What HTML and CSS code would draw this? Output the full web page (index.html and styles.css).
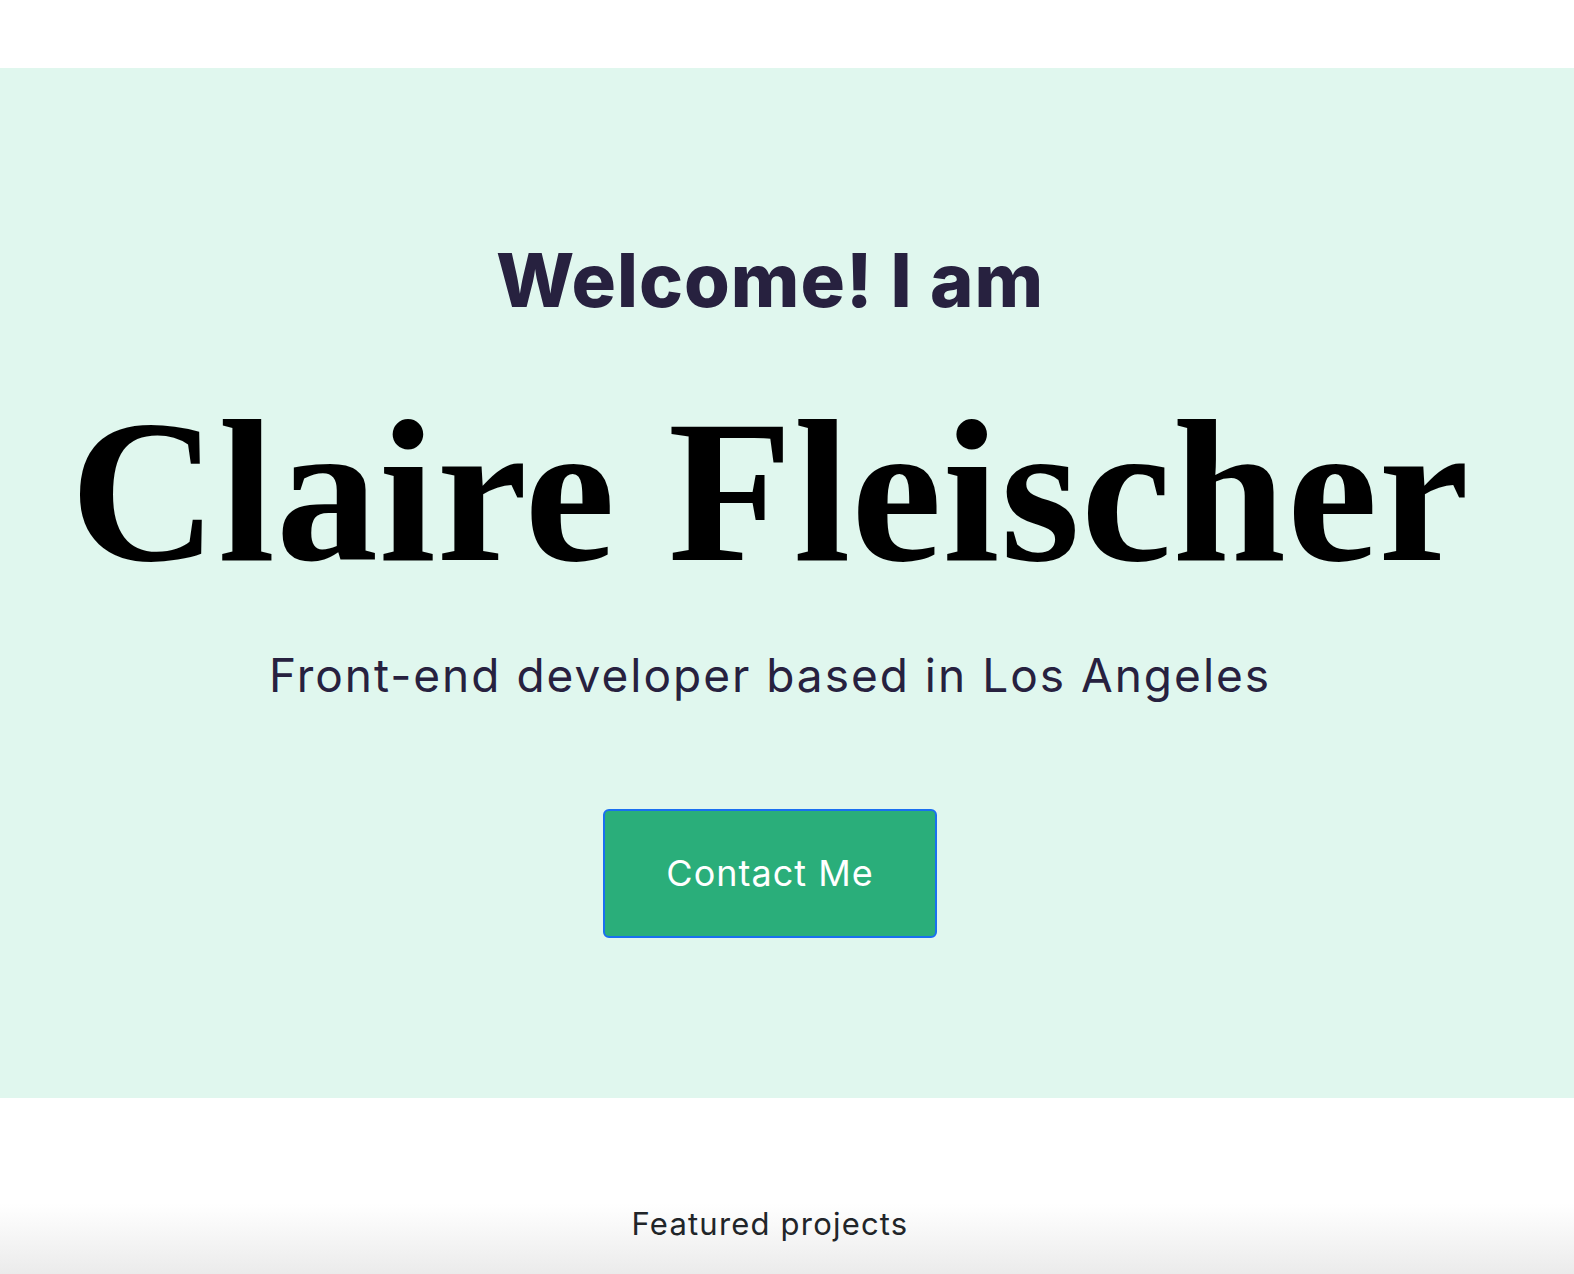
FILE: index.html
```html
<!DOCTYPE html>
<html lang="en">
<head>
<meta charset="utf-8">
<title>Claire Fleischer</title>
<link rel="stylesheet" href="styles.css">
</head>
<body>
<header class="topbar"></header>
<main>
  <section class="hero">
    <h2 class="welcome">Welcome! I am</h2>
    <h1 class="name">Claire Fleischer</h1>
    <p class="tagline">Front-end developer based in Los Angeles</p>
    <a class="contact-btn" href="#contact">Contact Me</a>
  </section>
  <section class="projects">
    <h3 class="projects-title">Featured projects</h3>
  </section>
</main>
</body>
</html>
```
FILE: styles.css
```css
html, body {
  margin: 0;
  padding: 0;
  background: #ffffff;
}
body {
  font-family: Inter, "Open Sans", sans-serif;
}
.topbar {
  height: 68px;
  background: #ffffff;
}
.hero {
  background: #e0f7ee;
  height: 1030px;
  box-sizing: border-box;
  padding: 168px 34px 0 0;
  display: flex;
  flex-direction: column;
  align-items: center;
}
.welcome {
  margin: 0;
  font-family: Inter, sans-serif;
  font-weight: 800;
  font-size: 74px;
  line-height: 1.2;
  color: #27213f;
  letter-spacing: 1px;
}
.name {
  margin: 64px 0 0;
  font-family: "Liberation Serif", "Times New Roman", serif;
  font-weight: 700;
  font-size: 204px;
  line-height: 1;
  color: #000000;
  white-space: nowrap;
  letter-spacing: 1px;
}
.tagline {
  margin: 55px 0 0;
  font-family: Inter, sans-serif;
  font-weight: 400;
  font-size: 46px;
  line-height: 1.2;
  color: #27213f;
  letter-spacing: 2px;
}
.contact-btn {
  margin-top: 106px;
  width: 334px;
  height: 129px;
  box-sizing: border-box;
  display: flex;
  align-items: center;
  justify-content: center;
  background: #2aae7a;
  border: 2px solid #1a6ff0;
  border-radius: 6px;
  color: #ffffff;
  text-decoration: none;
  font-family: Inter, sans-serif;
  font-size: 36px;
  font-weight: 400;
  letter-spacing: 1px;
}
.projects {
  height: 176px;
  box-sizing: border-box;
  padding: 107px 34px 0 0;
  background: linear-gradient(to bottom, #ffffff 0%, #ffffff 60%, #ebebeb 100%);
  text-align: center;
}
.projects-title {
  margin: 0;
  font-family: Inter, sans-serif;
  font-weight: 400;
  font-size: 31px;
  line-height: 1.2;
  color: #212529;
  letter-spacing: 1.2px;
}
```
